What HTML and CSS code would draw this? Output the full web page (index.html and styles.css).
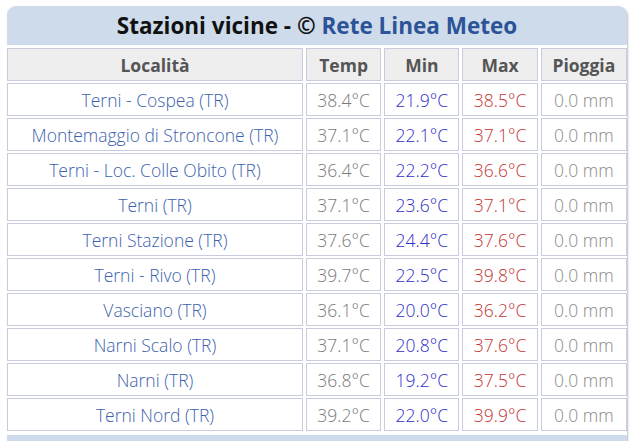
FILE: index.html
```html
<!DOCTYPE html>
<html lang="it">
<head>
<meta charset="utf-8">
<link rel="stylesheet" href="styles.css">
</head>
<body>
<div class="box">
  <div class="title">Stazioni vicine - © <span class="brand">Rete Linea Meteo</span></div>
  <div class="wrap">
    <table class="tbl">
      <thead>
        <tr><th class="c-loc">Località</th><th class="c-t">Temp</th><th class="c-t">Min</th><th class="c-t">Max</th><th class="c-p">Pioggia</th></tr>
      </thead>
      <tbody>
        <tr><td class="loc">Terni - Cospea (TR)</td><td class="tmp">38.4°C</td><td class="min">21.9°C</td><td class="max">38.5°C</td><td class="rain">0.0 mm</td></tr>
        <tr><td class="loc">Montemaggio di Stroncone (TR)</td><td class="tmp">37.1°C</td><td class="min">22.1°C</td><td class="max">37.1°C</td><td class="rain">0.0 mm</td></tr>
        <tr><td class="loc">Terni - Loc. Colle Obito (TR)</td><td class="tmp">36.4°C</td><td class="min">22.2°C</td><td class="max">36.6°C</td><td class="rain">0.0 mm</td></tr>
        <tr><td class="loc">Terni (TR)</td><td class="tmp">37.1°C</td><td class="min">23.6°C</td><td class="max">37.1°C</td><td class="rain">0.0 mm</td></tr>
        <tr><td class="loc">Terni Stazione (TR)</td><td class="tmp">37.6°C</td><td class="min">24.4°C</td><td class="max">37.6°C</td><td class="rain">0.0 mm</td></tr>
        <tr><td class="loc">Terni - Rivo (TR)</td><td class="tmp">39.7°C</td><td class="min">22.5°C</td><td class="max">39.8°C</td><td class="rain">0.0 mm</td></tr>
        <tr><td class="loc">Vasciano (TR)</td><td class="tmp">36.1°C</td><td class="min">20.0°C</td><td class="max">36.2°C</td><td class="rain">0.0 mm</td></tr>
        <tr><td class="loc">Narni Scalo (TR)</td><td class="tmp">37.1°C</td><td class="min">20.8°C</td><td class="max">37.6°C</td><td class="rain">0.0 mm</td></tr>
        <tr><td class="loc">Narni (TR)</td><td class="tmp">36.8°C</td><td class="min">19.2°C</td><td class="max">37.5°C</td><td class="rain">0.0 mm</td></tr>
        <tr><td class="loc">Terni Nord (TR)</td><td class="tmp">39.2°C</td><td class="min">22.0°C</td><td class="max">39.9°C</td><td class="rain">0.0 mm</td></tr>
      </tbody>
    </table>
  </div>
</div>
</body>
</html>
```

FILE: styles.css
```css
html, body {
  margin: 0;
  padding: 0;
  background: #ffffff;
}
body {
  font-family: "Open Sans", "DejaVu Sans", sans-serif;
}
.box {
  width: 620px;
  margin: 6px 0 0 7px;
  background: #cddbea;
  border-radius: 9px;
  box-shadow: 1px 1px 2px rgba(0, 0, 0, 0.25);
  padding-bottom: 14px;
  overflow: hidden;
}
.title {
  height: 39px;
  line-height: 39px;
  text-align: center;
  font-weight: 700;
  font-size: 22.5px;
  color: #111111;
}
.brand {
  color: #2c5397;
}
.wrap {
  background: #ffffff;
  padding: 1px 0 2px;
}
.tbl {
  border-collapse: separate;
  border-spacing: 3px 2px;
  margin: 0 -3px;
  width: 626px;
  table-layout: fixed;
}
.tbl th, .tbl td {
  border: 1px solid #c9cce0;
  height: 31px;
  padding: 0;
  text-align: center;
  vertical-align: middle;
  font-size: 17.5px;
  white-space: nowrap;
}
.tbl th {
  background: #eeeeee;
  color: #555555;
  font-weight: 700;
  height: 31px;
}
.c-loc { width: 293px; }
.c-t { width: 73px; }
.c-p { width: 84px; }
.tbl td {
  font-weight: 300;
  background: #ffffff;
}
.loc { color: #3c62ad; }
.tmp { color: #7a7a7a; }
.min { color: #2f2fc9; }
.max { color: #c23636; }
.rain { color: #8a8a8a; }
```
